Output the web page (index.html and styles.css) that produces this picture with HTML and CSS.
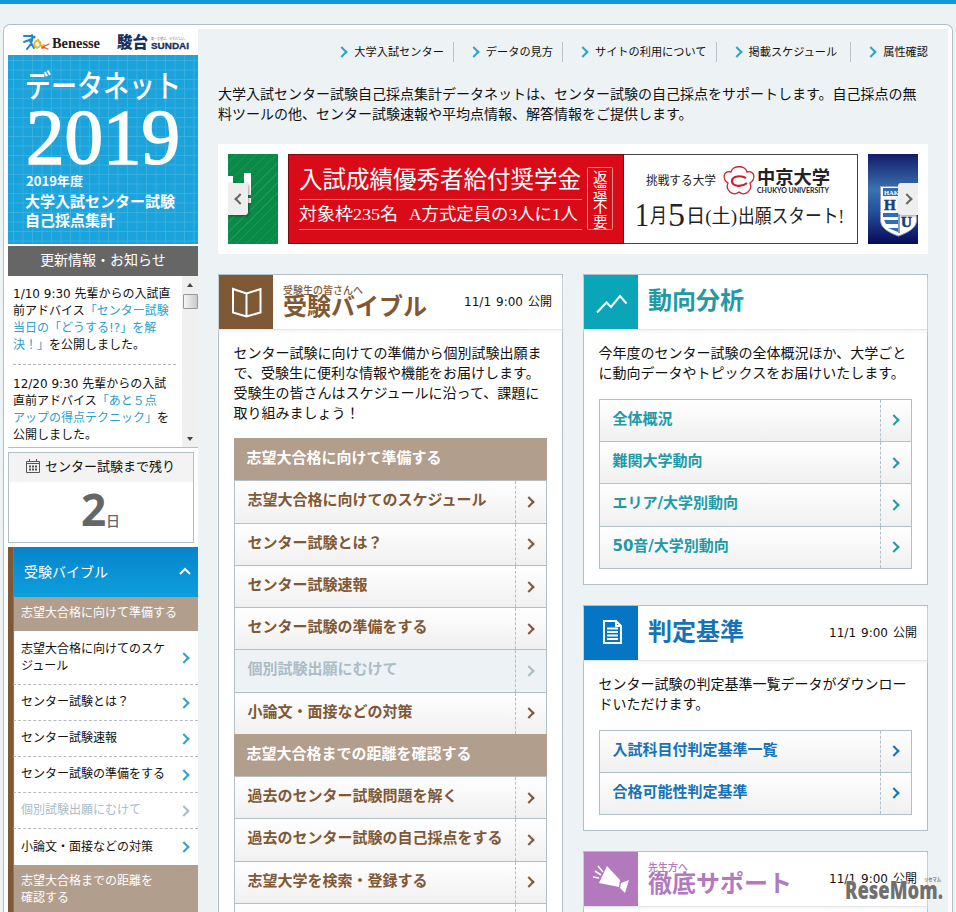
FILE: index.html
```
<!DOCTYPE html>
<html lang="ja">
<head>
    <meta charset="UTF-8">
    <meta name="viewport" content="width=device-width, initial-scale=1.0">
    <title>データネット2019</title>
    <link rel="stylesheet" href="styles.css">
</head>
<body>
    <div class="container">
        <div class="sidebar">
            <div class="logos">
                <svg width="190" height="30" viewBox="0 0 190 30">
                    <g fill="none" stroke-linecap="round">
                        <path d="M16 11l8 0M16 17l8-3M24 10c1 5-1 10-5 14M22 16l4 7" stroke="#2487c8" stroke-width="2"/>
                        <path d="M26 20c1-5 4-5 6-3s0 5-3 6M26 20l3 3M31 17l3 5 2-2" stroke="#efb42d" stroke-width="1.8"/>
                        <path d="M41 19l-6 3 5 2M34 23l2 0" stroke="#df5b3c" stroke-width="1.3"/>
                    </g>
                    <circle cx="26" cy="12" r="1.6" fill="#2487c8"/>
                    <circle cx="30" cy="15" r="1.3" fill="#efb42d"/>
                    <text class="logo-benesse" x="44" y="23" textLength="48" lengthAdjust="spacingAndGlyphs">Benesse</text>
                    <text class="logo-sundai-ja" x="109" y="23" textLength="31" lengthAdjust="spacingAndGlyphs">駿台</text>
                    <text class="logo-sundai-sub" x="143" y="15" textLength="36" lengthAdjust="spacingAndGlyphs">第一志望は、ゆずれない。</text>
                    <text class="logo-sundai" x="143" y="24" textLength="38" lengthAdjust="spacingAndGlyphs">SUNDAI</text>
                </svg>
            </div>
            <div class="hero">
                <svg width="190" height="189" viewBox="0 0 190 189">
                    <text class="hero-name" x="17" y="42" textLength="156" lengthAdjust="spacingAndGlyphs">データネット</text>
                    <text class="hero-year" x="18" y="108" textLength="154" lengthAdjust="spacingAndGlyphs">2019</text>
                    <text class="hero-small" x="18" y="131" textLength="57" lengthAdjust="spacingAndGlyphs">2019年度</text>
                    <text class="hero-text" x="17" y="152">大学入試センター試験</text>
                    <text class="hero-text" x="17" y="171">自己採点集計</text>
                </svg>
            </div>
            <h2 class="news-title">更新情報・お知らせ</h2>
            <div class="news">
                <div class="news-list">
                    <p>1/10 9:30 先輩からの入試直<br>前アドバイス<a>「センター試験<br>当日の「どうする!?」を解<br>決！」</a>を公開しました。</p>
                    <p>12/20 9:30 先輩からの入試<br>直前アドバイス<a>「あと５点<br>アップの得点テクニック」</a>を<br>公開しました。</p>
                </div>
                <div class="scrollbar">
                    <span class="scroll-up"></span>
                    <span class="scroll-thumb"></span>
                    <span class="scroll-down"></span>
                </div>
            </div>
            <div class="countdown">
                <div class="countdown-title">
                    <svg width="14" height="14" viewBox="0 0 14 14" fill="none" stroke="#555">
                        <path d="M.5 2.500h13v11H.5zM0 4.500h14M3.500 0v3M10.500 0v3"/>
                        <path d="M3 7.500h8M3 10.500h8" stroke-width="2" stroke-dasharray="2 1"/>
                    </svg>
                    センター試験まで残り
                </div>
                <div class="countdown-days"><b>2</b>日</div>
            </div>
            <div class="side-nav">
                <div class="side-head">受験バイブル
                    <svg width="12" height="8" viewBox="0 0 12 8"><path d="M1 7l5-5 5 5" fill="none" stroke="#fff" stroke-width="2"/></svg>
                </div>
                <div class="side-group">志望大合格に向けて準備する</div>
                <a class="side-item tall">志望大合格に向けてのスケ<br>ジュール<i class="arrow"></i></a>
                <a class="side-item">センター試験とは？<i class="arrow"></i></a>
                <a class="side-item">センター試験速報<i class="arrow"></i></a>
                <a class="side-item">センター試験の準備をする<i class="arrow"></i></a>
                <a class="side-item disabled">個別試験出願にむけて<i class="arrow"></i></a>
                <a class="side-item last">小論文・面接などの対策<i class="arrow"></i></a>
                <div class="side-group">志望大合格までの距離を<br>確認する</div>
            </div>
        </div>

        <div class="main">
            <div class="top-nav">
                <a><i class="arrow"></i>大学入試センター</a>
                <a><i class="arrow"></i>データの見方</a>
                <a><i class="arrow"></i>サイトの利用について</a>
                <a class="wide"><i class="arrow"></i>掲載スケジュール</a>
                <a><i class="arrow"></i>属性確認</a>
            </div>
            <p class="intro">大学入試センター試験自己採点集計データネットは、センター試験の自己採点をサポートします。自己採点の無<br>料ツールの他、センター試験速報や平均点情報、解答情報をご提供します。</p>

            <div class="slider">
                <div class="slide slide-green">
                    <svg width="50" height="90" viewBox="0 0 50 90">
                        <path d="M0 22h5v7h11V19h7v22h-3v3h3v5H0z" fill="#fff"/>
                    </svg>
                    <span class="slide-btn prev"><i class="arrow"></i></span>
                </div>
                <svg class="banner" width="570" height="90" viewBox="0 0 570 90">
                    <rect x=".5" y=".5" width="569" height="89" fill="#fff" stroke="#444"/>
                    <rect x=".5" y=".5" width="335" height="89" fill="#d90b18" stroke="#7c0a10"/>
                    <path d="M11 45.500h283M11 75.500h283" stroke="#f59a94"/>
                    <rect x="299.500" y="13.500" width="25" height="62" rx="1" fill="#d90b18" stroke="#f28d88"/>
                    <g fill="#fff">
                        <text class="banner-text" font-size="23.500" x="11" y="34" textLength="282">入試成績優秀者給付奨学金</text>
                        <text class="banner-text" font-size="17" x="11" y="66" textLength="99" lengthAdjust="spacingAndGlyphs">対象枠235名</text>
                        <text class="banner-text" font-size="17" x="121" y="66" textLength="169" lengthAdjust="spacingAndGlyphs">A方式定員の3人に1人</text>
                        <text class="banner-text" font-size="14.500" x="305" y="29">返</text>
                        <text class="banner-text" font-size="14.500" x="305" y="43.500">還</text>
                        <text class="banner-text" font-size="14.500" x="305" y="58">不</text>
                        <text class="banner-text" font-size="14.500" x="305" y="72.500">要</text>
                    </g>
                    <g fill="#222">
                        <text class="banner-text" font-size="12" x="358" y="31" textLength="70" lengthAdjust="spacingAndGlyphs">挑戦する大学</text>
                        <text class="banner-bold" font-size="18" x="469" y="30" textLength="73" lengthAdjust="spacingAndGlyphs">中京大学</text>
                        <text class="banner-latin" font-size="7" x="469" y="39" textLength="72" lengthAdjust="spacingAndGlyphs">CHUKYO UNIVERSITY</text>
                        <text class="banner-text" font-size="34" x="347" y="72" textLength="14" lengthAdjust="spacingAndGlyphs">1</text>
                        <text class="banner-text" font-size="20" x="362" y="69" textLength="17" lengthAdjust="spacingAndGlyphs">月</text>
                        <text class="banner-text" font-size="34" x="380" y="72" textLength="17" lengthAdjust="spacingAndGlyphs">5</text>
                        <text class="banner-text" font-size="19" x="398" y="69" textLength="51" lengthAdjust="spacingAndGlyphs">日(土)</text>
                        <text class="banner-text" font-size="19" x="450" y="69" textLength="106" lengthAdjust="spacingAndGlyphs">出願スタート!</text>
                    </g>
                    <g fill="none" stroke="#c7232d" stroke-width="1.300">
                        <path d="M443 18C444 11 458 11 459 18C467 16 468 25 462 29C465 36 457 43 451 38C445 43 437 36 440 29C434 25 435 16 443 18z"/>
                        <path d="M458 24c-5-3-14-2-14 3s9 7 15 2" stroke-width="2.200"/>
                    </g>
                </svg>
                <div class="slide slide-blue">
                    <svg width="50" height="90" viewBox="0 0 50 90">
                        <path d="M12.500 32.500h36v34c0 7-8 12-18 15.500c-10-3.500-18-8-18-16z" fill="#fff" stroke="#9c9fb4"/>
                        <path d="M15 34h33v8H15zM15 59h15v4H15zM16 66h14v4H18zM20 74h10v4z" fill="#2d6fb5"/>
                        <path d="M31 34v45" stroke="#173f7c"/>
                        <text class="shield-name" x="16" y="41">HAK</text>
                        <text class="shield-letter" x="16" y="56">H</text>
                        <text class="shield-letter" x="33" y="73">U</text>
                    </svg>
                    <span class="slide-btn next"><i class="arrow"></i></span>
                </div>
            </div>

            <div class="columns">
                <div class="column">
                    <div class="panel brown">
                        <div class="panel-head">
                            <div class="panel-icon">
                                <svg width="54" height="54" viewBox="0 0 54 54" fill="none" stroke="#fff" stroke-width="2">
                                    <path d="M27.500 18.500L14 14v23.500l13.500 4 14-4V14zM27.500 18.500v23"/>
                                </svg>
                            </div>
                            <h3 class="panel-title with-sub"><small>受験生の皆さんへ</small>受験バイブル</h3>
                            <span class="date">11/1 9:00 公開</span>
                        </div>
                        <p class="panel-text">センター試験に向けての準備から個別試験出願ま<br>で、受験生に便利な情報や機能をお届けします。<br>受験生の皆さんはスケジュールに沿って、課題に<br>取り組みましょう！</p>
                        <div class="link-list">
                            <div class="list-head">志望大合格に向けて準備する</div>
                            <a>志望大合格に向けてのスケジュール<span><i class="arrow"></i></span></a>
                            <a>センター試験とは？<span><i class="arrow"></i></span></a>
                            <a>センター試験速報<span><i class="arrow"></i></span></a>
                            <a>センター試験の準備をする<span><i class="arrow"></i></span></a>
                            <a class="disabled">個別試験出願にむけて<span><i class="arrow"></i></span></a>
                            <a>小論文・面接などの対策<span><i class="arrow"></i></span></a>
                            <div class="list-head">志望大合格までの距離を確認する</div>
                            <a>過去のセンター試験問題を解く<span><i class="arrow"></i></span></a>
                            <a>過去のセンター試験の自己採点をする<span><i class="arrow"></i></span></a>
                            <a>志望大学を検索・登録する<span><i class="arrow"></i></span></a>
                            <a><span></span></a>
                        </div>
                    </div>
                </div>

                <div class="column">
                    <div class="panel teal">
                        <div class="panel-head">
                            <div class="panel-icon">
                                <svg width="54" height="54" viewBox="0 0 54 54" fill="none" stroke="#fff" stroke-width="2">
                                    <path d="M13 37.500l9.500-10 4.500 4.500 9-11 6.500 7.500"/>
                                </svg>
                            </div>
                            <h3 class="panel-title">動向分析</h3>
                        </div>
                        <p class="panel-text">今年度のセンター試験の全体概況ほか、大学ごと<br>に動向データやトピックスをお届けいたします。</p>
                        <div class="link-list">
                            <a>全体概況<span><i class="arrow"></i></span></a>
                            <a>難関大学動向<span><i class="arrow"></i></span></a>
                            <a>エリア/大学別動向<span><i class="arrow"></i></span></a>
                            <a>50音/大学別動向<span><i class="arrow"></i></span></a>
                        </div>
                    </div>

                    <div class="panel blue">
                        <div class="panel-head">
                            <div class="panel-icon">
                                <svg width="54" height="54" viewBox="0 0 54 54" fill="none" stroke="#fff" stroke-width="2">
                                    <path d="M20 15h12l5 5v17H20zM32 15v5h5M23 22.500h11M23 26h11M23 29.500h11M23 33h11"/>
                                </svg>
                            </div>
                            <h3 class="panel-title">判定基準</h3>
                            <span class="date">11/1 9:00 公開</span>
                        </div>
                        <p class="panel-text">センター試験の判定基準一覧データがダウンロー<br>ドいただけます。</p>
                        <div class="link-list">
                            <a>入試科目付判定基準一覧<span><i class="arrow"></i></span></a>
                            <a>合格可能性判定基準<span><i class="arrow"></i></span></a>
                        </div>
                    </div>

                    <div class="panel purple">
                        <div class="panel-head">
                            <div class="panel-icon">
                                <svg width="54" height="54" viewBox="0 0 54 54">
                                    <path d="M23 14l13 14-1 7-20-4zM37 31l8-3-4 13-5-5z" fill="#fff"/>
                                    <path d="M14 14l5 6M11 19l6 4M9 25l6 1" stroke="#fff" stroke-width="1.600"/>
                                </svg>
                            </div>
                            <h3 class="panel-title with-sub"><small>先生方へ</small>徹底サポート</h3>
                            <span class="date">11/1 9:00 公開</span>
                        </div>
                    </div>
                </div>
            </div>
        </div>
    </div>

    <svg class="watermark" width="106" height="36" viewBox="0 0 106 36">
        <text class="watermark-text" x="5" y="26" textLength="98" lengthAdjust="spacingAndGlyphs">ReseMom.</text>
        <text class="watermark-kana" x="84" y="8" textLength="17" lengthAdjust="spacingAndGlyphs">リセマム</text>
    </svg>
</body>
</html>
```

FILE: styles.css
```
* {
    box-sizing: border-box;
}
body {
    margin: 0;
    height: 912px;
    overflow: hidden;
    border-top: 4px solid #0f9ad7;
    background: #edf2f5;
    color: #111;
    font-family: "DejaVu Sans", "Noto Sans CJK JP", sans-serif;
    font-size: 12px;
}
h2, h3, p {
    margin: 0;
}
svg {
    display: block;
}
i.arrow {
    flex: none;
    width: 8px;
    height: 8px;
    border: solid #2fa3cc;
    border-width: 2px 2px 0 0;
    transform: rotate(45deg);
}
.container {
    display: flex;
    width: 950px;
    height: 888px;
    margin: 20px 0 0 3px;
    padding: 0 4px;
    overflow: hidden;
    border: 1px solid #b0bfc8;
    border-bottom: 0;
    border-radius: 7px 7px 0 0;
    background: #fff;
}

/* sidebar */
.sidebar {
    width: 190px;
    flex: none;
}
.logos {
    height: 30px;
}
.logo-benesse {
    font: bold 15px "Liberation Serif", serif;
    fill: #222;
}
.logo-sundai-ja {
    font: 900 16px "Noto Sans CJK JP", sans-serif;
    fill: #17305f;
}
.logo-sundai-sub {
    font: 3.5px "Noto Sans CJK JP", sans-serif;
    fill: #778;
}
.logo-sundai {
    font: bold 9.5px "Liberation Sans", sans-serif;
    fill: #17305f;
    stroke: #17305f;
    stroke-width: .3px;
}
.hero {
    height: 189px;
    background-color: #1ba3dc;
    background-image: linear-gradient(#3aafe0 1px, transparent 1px), linear-gradient(90deg, #3aafe0 1px, transparent 1px);
    background-size: 9.5px 9.5px;
    background-position: 5px 5px;
}
.hero text {
    fill: #fff;
    font-family: "Noto Sans CJK JP", sans-serif;
    font-weight: bold;
}
.hero .hero-name {
    font-size: 31px;
    font-weight: 500;
}
.hero .hero-year {
    font: 78px "Liberation Serif", serif;
    stroke: #fff;
    stroke-width: 1.6px;
}
.hero-small {
    font-size: 12.5px;
}
.hero-text {
    font-size: 15px;
}
.news-title {
    height: 30px;
    margin-top: 2px;
    background: #666;
    color: #fff;
    font-size: 14px;
    font-weight: normal;
    line-height: 28px;
    text-align: center;
}
.news {
    display: flex;
    height: 172px;
    border-bottom: 1px solid #b0bfc8;
}
.news-list {
    width: 174px;
    padding: 10px 6px 0 5px;
    overflow: hidden;
    white-space: nowrap;
}
.news-list p {
    height: 79px;
    line-height: 17.1px;
    border-bottom: 1px dashed #b5b5b5;
}
.news-list p + p {
    height: 82px;
    padding-top: 11px;
    border: 0;
}
.news-list a {
    color: #2da0cb;
}
.scrollbar {
    display: flex;
    flex-direction: column;
    align-items: center;
    width: 16px;
    padding: 7px 0 6px;
    background: #f0f0f0;
}
.scroll-up, .scroll-down {
    border: 3.5px solid transparent;
    border-top-width: 0;
    border-bottom: 4px solid #444;
}
.scroll-down {
    margin-top: auto;
    border-top: 4px solid #444;
    border-bottom-width: 0;
}
.scroll-thumb {
    width: 15px;
    height: 15px;
    margin-top: 7px;
    border: 1px solid #999;
    border-radius: 1px;
    background: linear-gradient(90deg, #f5f5f5, #c9c9cd);
}
.countdown {
    width: 186px;
    height: 91px;
    margin-top: 4px;
    border: 1px solid #b0bfc8;
}
.countdown-title {
    display: flex;
    align-items: center;
    height: 29px;
    padding: 0 0 4px 17px;
    background: #f3f3f3;
    font-size: 13px;
    gap: 5px;
}
.countdown-days {
    padding-right: 1px;
    color: #666;
    font-size: 14px;
    font-weight: 500;
    line-height: 57px;
    text-align: center;
}
.countdown-days b {
    font: bold 44px/55px "Open Sans", sans-serif;
}
.side-nav {
    margin-top: 4px;
    border-left: 5px solid #7f5836;
}
.side-nav > * {
    border-left: 1px solid #2a98a8;
}
.side-head {
    display: flex;
    align-items: center;
    justify-content: space-between;
    height: 50px;
    padding: 0 7px 3px 10px;
    background: linear-gradient(#0883cc, #0d9fdc);
    color: #fff;
    font-size: 14px;
}
.side-group {
    padding: 8px 7px 9px;
    background: #b29e8d;
    color: #fff;
    line-height: 17px;
}
.side-item {
    display: flex;
    align-items: center;
    justify-content: space-between;
    height: 36px;
    padding: 0 10px 0 7px;
    border-bottom: 1px dashed #b5bcc0;
    line-height: 17px;
}
.side-item.tall {
    height: 54px;
}
.side-item.last {
    border-bottom: 0;
}
.side-item.disabled, .link-list a.disabled {
    color: #aabcc6;
}
.disabled i.arrow {
    border-color: #aabcc6;
}

/* main area */
.main {
    width: 750px;
    margin-top: 4px;
    padding: 13px 20px 0;
    background: #edf2f5;
}
.top-nav {
    display: flex;
    justify-content: flex-end;
    height: 20px;
    font-size: 11.2px;
    line-height: 19px;
    white-space: nowrap;
}
.top-nav a {
    display: flex;
    align-items: center;
    padding: 0 9px 0 15px;
    border-right: 1px solid #b8c3ca;
    gap: 8px;
}
.top-nav a.wide {
    padding-right: 13px;
}
.top-nav a:last-child {
    padding-right: 0;
    border: 0;
}
.top-nav a + a {
    padding-left: 16px;
}
.intro {
    margin-top: 22px;
    height: 60px;
    font-size: 14px;
    line-height: 20px;
    white-space: nowrap;
}
.slider {
    display: flex;
    gap: 10px;
    height: 110px;
    padding: 10px;
    background: #fff;
}
.slide {
    position: relative;
    width: 50px;
    height: 90px;
    overflow: hidden;
}
.slide-green {
    background: repeating-linear-gradient(135deg, #0a8a47 0, #0a8a47 6px, #209655 6px, #209655 7px);
}
.slide-blue {
    background: linear-gradient(#141b6b, #3974b0 40%, #244d99 65%, #070a56);
}
.slide-btn {
    display: flex;
    align-items: center;
    justify-content: center;
    position: absolute;
    top: 29px;
    left: 0;
    width: 20px;
    height: 32px;
    border-radius: 0 3px 3px 0;
    background: #eee;
    box-shadow: 1px 1px 3px rgba(0, 0, 0, 0.4);
}
.slide-btn.next {
    left: 30px;
    border-radius: 3px 0 0 3px;
}
.slide-btn i.arrow {
    border-color: #666;
    margin-right: 2px;
}
.slide-btn.prev i.arrow {
    transform: rotate(225deg);
    margin: 0 0 0 3px;
}
.banner-text {
    font-family: "Liberation Serif", "Noto Sans CJK JP", serif;
}
.banner-bold {
    font-family: "Noto Sans CJK JP", sans-serif;
    font-weight: bold;
}
.banner-latin {
    font-family: Lato, sans-serif;
    font-weight: bold;
}
.shield-name {
    font: bold 6.5px "Liberation Serif", serif;
    fill: #fff;
}
.shield-letter {
    font: bold 15px "Liberation Serif", serif;
    fill: #173f7c;
    stroke: #173f7c;
    stroke-width: .6px;
}
.columns {
    display: flex;
    gap: 20px;
    margin-top: 20px;
}
.column {
    width: 345px;
}
.panel {
    margin-bottom: 20px;
    padding-bottom: 15px;
    border: 1px solid #b0bfc8;
    background: #fff;
}
.panel-head {
    display: flex;
    height: 55px;
    padding-right: 10px;
    border-bottom: 1px solid #e3e6e8;
    box-shadow: 0 2px 2px #f5f5f5;
}
.panel-icon {
    width: 54px;
    height: 54px;
}
.panel-title {
    flex: 1;
    padding: 11px 0 0 10px;
    font-size: 24px;
    line-height: 30px;
    white-space: nowrap;
}
.panel-title.with-sub {
    padding-top: 10px;
    line-height: 23px;
}
.panel-title small {
    display: block;
    font-size: 10px;
    font-weight: 500;
    line-height: 11px;
}
.date {
    line-height: 55px;
    word-spacing: 1.2px;
}
.panel-text {
    padding: 14.4px 0 0 14.6px;
    font-size: 14px;
    line-height: 19.7px;
    white-space: nowrap;
}
.link-list {
    width: 313px;
    margin: 15px 0 0 15px;
    border: 1px solid #b0bfc8;
    border-top: 0;
    font-size: 15px;
    font-weight: bold;
    line-height: 39px;
}
.link-list > * {
    display: flex;
    justify-content: space-between;
    height: 42.25px;
    padding-left: 12.5px;
    border-top: 1px solid #b0bfc8;
    white-space: nowrap;
}
.link-list a {
    background: linear-gradient(#fff, #f0f0f0);
}
.link-list a.disabled {
    background: #edf2f5;
}
.link-list span {
    display: flex;
    align-items: center;
    width: 31px;
    margin-left: auto;
    padding-left: 9px;
    border-left: 1px dashed #b0bfc8;
}
.link-list .list-head {
    margin: 0 -1px;
    background: #b29e8d;
    border-color: #b29e8d;
    color: #fff;
}
.brown .panel-icon { background: #7f5836; }
.brown .panel-title, .brown a { color: #7f5836; }
.brown a:not(.disabled) i.arrow { border-color: #7f5836; }
.brown .link-list a.disabled { color: #aabcc6; }
.teal .panel-icon { background: #0aa5b8; }
.teal .panel-title, .teal a { color: #219aa6; }
.teal i.arrow { border-color: #219aa6; }
.blue .panel-icon { background: #0575c4; }
.blue .panel-title, .blue a { color: #1573b7; }
.blue i.arrow { border-color: #1573b7; }
.purple .panel-icon { background: #b279bd; }
.purple .panel-title { color: #b279bd; }

/* site mark over the page corner */
.watermark {
    position: absolute;
    left: 840px;
    top: 873px;
}
.watermark-text {
    font: 800 25px "Open Sans", sans-serif;
    fill: #707070;
    stroke: #fff;
    stroke-width: 1px;
    paint-order: stroke;
}
.watermark-kana {
    font: bold 5px "Noto Sans CJK JP", sans-serif;
    fill: #777;
}
```
